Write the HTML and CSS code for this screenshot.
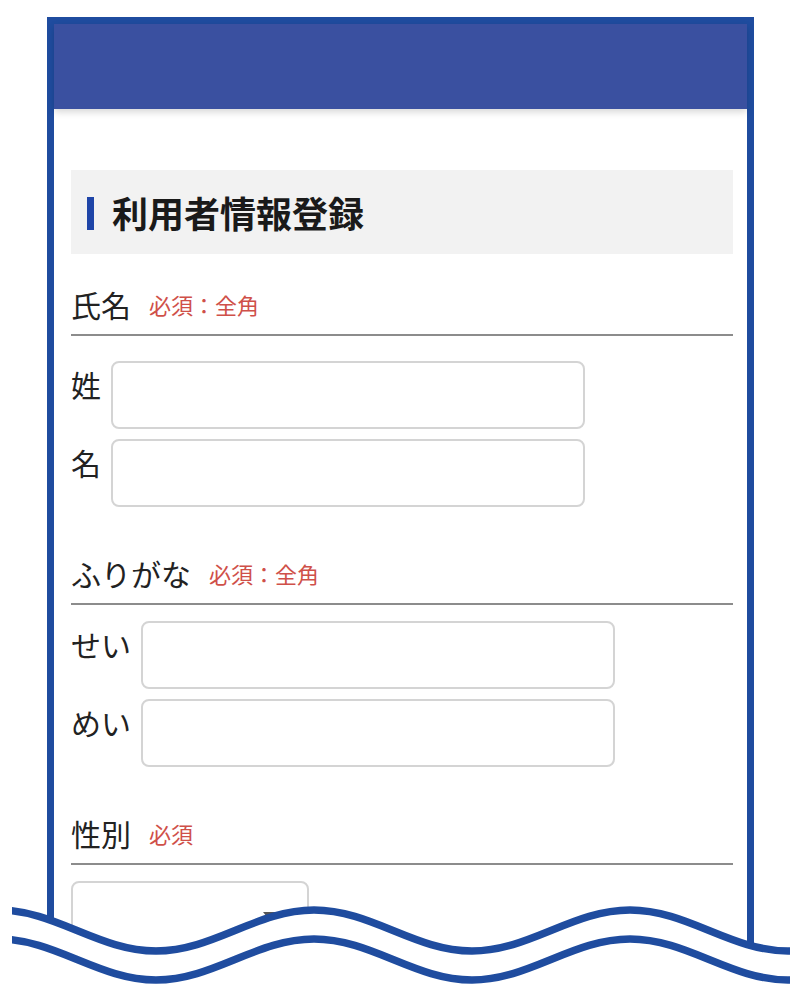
FILE: index.html
```html
<!DOCTYPE html>
<html lang="ja">
<head>
<title>利用者情報登録</title>
<meta name="viewport" content="width=device-width, initial-scale=1.0">
<link rel="stylesheet" href="styles.css">
</head>
<body>

<div class="marco">
    <div class="cabecera"></div>

    <div class="contenido">
        <h1 class="titulo"><span class="barra"></span>利用者情報登録</h1>

        <div class="seccion primera">
            <div class="etiqueta">氏名<span class="requerido">必須：全角</span></div>
            <div class="campos">
                <div class="fila">
                    <span class="nombre-campo">姓</span>
                    <div class="entrada"></div>
                </div>
                <div class="fila">
                    <span class="nombre-campo">名</span>
                    <div class="entrada"></div>
                </div>
            </div>
        </div>

        <div class="seccion">
            <div class="etiqueta">ふりがな<span class="requerido">必須：全角</span></div>
            <div class="campos">
                <div class="fila">
                    <span class="nombre-campo">せい</span>
                    <div class="entrada"></div>
                </div>
                <div class="fila">
                    <span class="nombre-campo">めい</span>
                    <div class="entrada"></div>
                </div>
            </div>
        </div>

        <div class="seccion">
            <div class="etiqueta">性別<span class="requerido">必須</span></div>
            <div class="campos">
                <div class="selector"><span class="flecha"></span></div>
            </div>
        </div>
    </div>
</div>

<!-- corte ondulado -->
<svg class="onda" viewBox="12 880 778 113" width="778" height="113">
    <path fill="#fff" d="M -2 910 C 55.5 910 98.5 951 156 951 C 213.5 951 256.5 910 314 910 C 371.5 910 414.5 951 472 951 C 529.5 951 572.5 910 630 910 C 687.5 910 730.5 951 788 951 L 800 951 L 800 1000 L -2 1000 Z"/>
    <path fill="none" stroke="#1f4c9f" stroke-width="7.5" d="M -2 910 C 55.5 910 98.5 951 156 951 C 213.5 951 256.5 910 314 910 C 371.5 910 414.5 951 472 951 C 529.5 951 572.5 910 630 910 C 687.5 910 730.5 951 788 951 L 800 951"/>
    <path fill="none" stroke="#1f4c9f" stroke-width="7.5" d="M -2 939 C 55.5 939 98.5 980 156 980 C 213.5 980 256.5 939 314 939 C 371.5 939 414.5 980 472 980 C 529.5 980 572.5 939 630 939 C 687.5 939 730.5 980 788 980 L 800 980"/>
</svg>

</body>
</html>
```

FILE: styles.css
```css
body {
    margin: 0;
    height: 993px;
    overflow: hidden;
    position: relative;
    background: #fff;
    color: #222;
    font-family: "Noto Sans CJK JP", "Noto Sans", sans-serif;
}

.marco {
    box-sizing: border-box;
    width: 707px;
    height: 1000px;
    margin: 17px 0 0 47px;
    border: 7px solid #1f4c9f;
    border-bottom: none;
}

.cabecera {
    height: 85px;
    background: #3a50a0;
    box-shadow: 0 3px 7px rgba(0, 0, 0, 0.16);
}

.contenido {
    padding: 61px 14px 0 17px;
}

.titulo {
    display: flex;
    align-items: center;
    height: 84px;
    margin: 0;
    padding-left: 16px;
    background: #f2f2f2;
    font-size: 36px;
    font-weight: 700;
    color: #1a1a1a;
}

.barra {
    width: 7px;
    height: 33px;
    margin: 2px 18px 0 0;
    background: #1f45a8;
}

.seccion {
    margin-top: 46px;
}

.seccion.primera {
    margin-top: 30px;
}

.etiqueta {
    display: flex;
    align-items: center;
    height: 40px;
    padding-bottom: 10px;
    border-bottom: 2px solid #8c8c8c;
    font-size: 30px;
    line-height: 40px;
}

.requerido {
    margin-left: 18px;
    font-size: 22px;
    color: #cf5049;
}

.campos {
    display: flex;
    flex-direction: column;
    gap: 10px;
    padding-top: 16px;
}

.primera .campos {
    padding-top: 25px;
}

.fila {
    display: flex;
    align-items: flex-start;
    gap: 10px;
}

.nombre-campo {
    padding-top: 3px;
    font-size: 30px;
    line-height: 40px;
}

.entrada {
    box-sizing: border-box;
    width: 474px;
    height: 68px;
    border: 2px solid #d4d4d4;
    border-radius: 8px;
    background: #fff;
}

.selector {
    position: relative;
    box-sizing: border-box;
    width: 238px;
    height: 68px;
    border: 2px solid #d4d4d4;
    border-radius: 8px;
}

.flecha {
    position: absolute;
    right: 28px;
    top: 29px;
    border-left: 8px solid transparent;
    border-right: 8px solid transparent;
    border-top: 10px solid #555;
}

.onda {
    position: absolute;
    left: 12px;
    top: 880px;
}
```
